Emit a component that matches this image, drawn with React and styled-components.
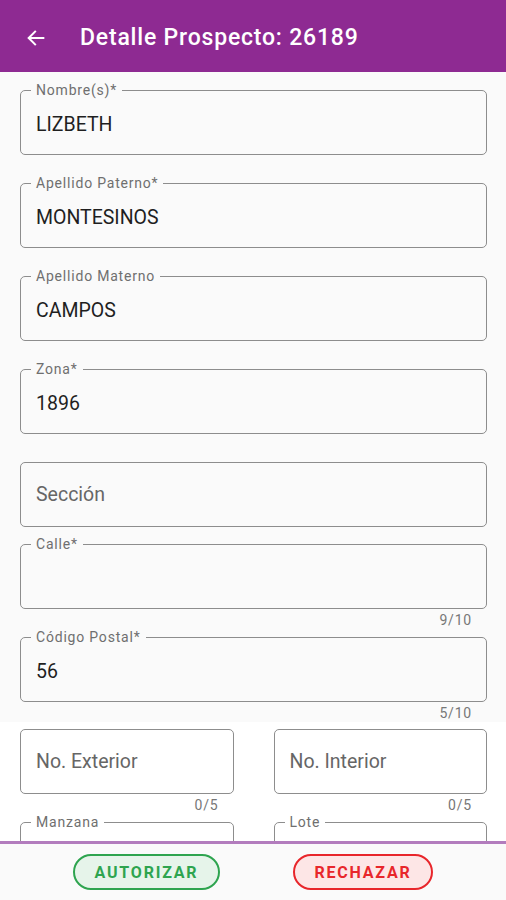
import React from 'react';
import styled, {createGlobalStyle} from 'styled-components';

const GlobalStyle = createGlobalStyle`
  html, body {
    margin: 0;
    padding: 0;
    background: #fafafa;
    font-family: Roboto, "Noto Sans", Arial, sans-serif;
  }
`;

const Screen = styled.div`
  width: 506px;
  height: 900px;
  display: flex;
  flex-direction: column;
  overflow: hidden;
  background: #fafafa;
`;

const TopBar = styled.header`
  box-sizing: border-box;
  height: 72px;
  flex-shrink: 0;
  display: flex;
  align-items: center;
  padding: 3px 0 0 24px;
  background: #8e2a92;
  color: #fff;
`;

const BackButton = styled.button`
  width: 24px;
  height: 24px;
  margin-right: 32px;
  padding: 0;
  border: none;
  background: none;
  display: flex;
  align-items: center;
  justify-content: center;
`;

const Title = styled.h1`
  margin: 0;
  font-size: 23px;
  font-weight: 500;
  letter-spacing: 0.8px;
`;

const Form = styled.main`
  flex: 1;
  overflow: hidden;
  padding-top: 11px;
`;

const Section = styled.div`
  padding: 0 19px 0 20px;
  background: ${p => (p.$white ? '#fff' : 'transparent')};
`;

const Row = styled.div`
  display: flex;
  gap: 40px;
  & > * {
    flex: 1;
    min-width: 0;
  }
`;

const FieldWrap = styled.div`
  display: flex;
  flex-direction: column;
`;

const Box = styled.fieldset`
  box-sizing: border-box;
  height: ${p => (p.$bare ? 65 : 72)}px;
  margin: ${p => (p.$bare ? '7px 0 0' : '0')};
  padding: 0 10px;
  border: 1px solid #8d8d8d;
  border-radius: 5px;
  min-width: 0;
`;

const Legend = styled.legend`
  padding: 0 5px;
  font-size: 14px;
  line-height: 14px;
  letter-spacing: 0.8px;
  color: #6f6f6f;
  white-space: nowrap;
`;

const Value = styled.div`
  box-sizing: border-box;
  height: ${p => (p.$bare ? 63 : 57)}px;
  display: flex;
  align-items: center;
  padding: 0 5px ${p => (p.$bare ? '1px' : '3px')};
  font-size: 19.5px;
  color: ${p => (p.$placeholder ? '#666' : '#1f1f1f')};
`;

const Helper = styled.div`
  height: ${p => p.$h}px;
  padding-right: 15px;
  font-size: 14px;
  line-height: 22px;
  letter-spacing: 0.8px;
  text-align: right;
  color: #777;
`;

const Footer = styled.footer`
  height: 56px;
  flex-shrink: 0;
  border-top: 3px solid #b27cbd;
  background: #fafafa;
  display: flex;
  align-items: center;
  justify-content: space-evenly;
`;

const ActionButton = styled.button`
  box-sizing: border-box;
  height: 36px;
  width: ${p => p.$w}px;
  padding: 0;
  border: 2px solid ${p => p.$color};
  border-radius: 18px;
  background: ${p => p.$bg};
  color: ${p => p.$color};
  font-family: Roboto, Arial, sans-serif;
  font-size: 16px;
  font-weight: 700;
  letter-spacing: 1.8px;
`;

const BackArrow = () => (
  <svg width="22" height="22" viewBox="0 0 24 24" fill="none" stroke="#fff" strokeWidth="2.2" strokeLinecap="square">
    <path d="M20 12H5"/>
    <path d="M11 5l-7 7 7 7"/>
  </svg>
);

const Field = ({label, value, placeholder, counter, helper = 21}) => (
  <FieldWrap>
    <Box $bare={!label}>
      {label && <Legend>{label}</Legend>}
      {value
        ? <Value $bare={!label}>{value}</Value>
        : <Value $bare={!label} $placeholder>{placeholder}</Value>}
    </Box>
    <Helper $h={helper}>{counter}</Helper>
  </FieldWrap>
);

const App = () => (
  <Screen>
    <GlobalStyle/>
    <TopBar>
      <BackButton aria-label="Regresar"><BackArrow/></BackButton>
      <Title>Detalle Prospecto: 26189</Title>
    </TopBar>

    <Form>
      <Section>
        <Field label="Nombre(s)*" value="LIZBETH"/>
        <Field label="Apellido Paterno*" value="MONTESINOS"/>
        <Field label="Apellido Materno" value="CAMPOS"/>
        <Field label="Zona*" value="1896"/>
        <Field placeholder="Sección" helper={10}/>
        <Field label="Calle*" counter="9/10"/>
        <Field label="Código Postal*" value="56" counter="5/10" helper={20}/>
      </Section>
      <Section $white>
        <Row>
          <Field placeholder="No. Exterior" counter="0/5"/>
          <Field placeholder="No. Interior" counter="0/5"/>
        </Row>
        <Row>
          <Field label="Manzana"/>
          <Field label="Lote"/>
        </Row>
      </Section>
    </Form>

    <Footer>
      <ActionButton $w={147} $color="#2ea44f" $bg="#e6f4ea">AUTORIZAR</ActionButton>
      <ActionButton $w={140} $color="#e8262b" $bg="#fde6e6">RECHAZAR</ActionButton>
    </Footer>
  </Screen>
);

export default App;
